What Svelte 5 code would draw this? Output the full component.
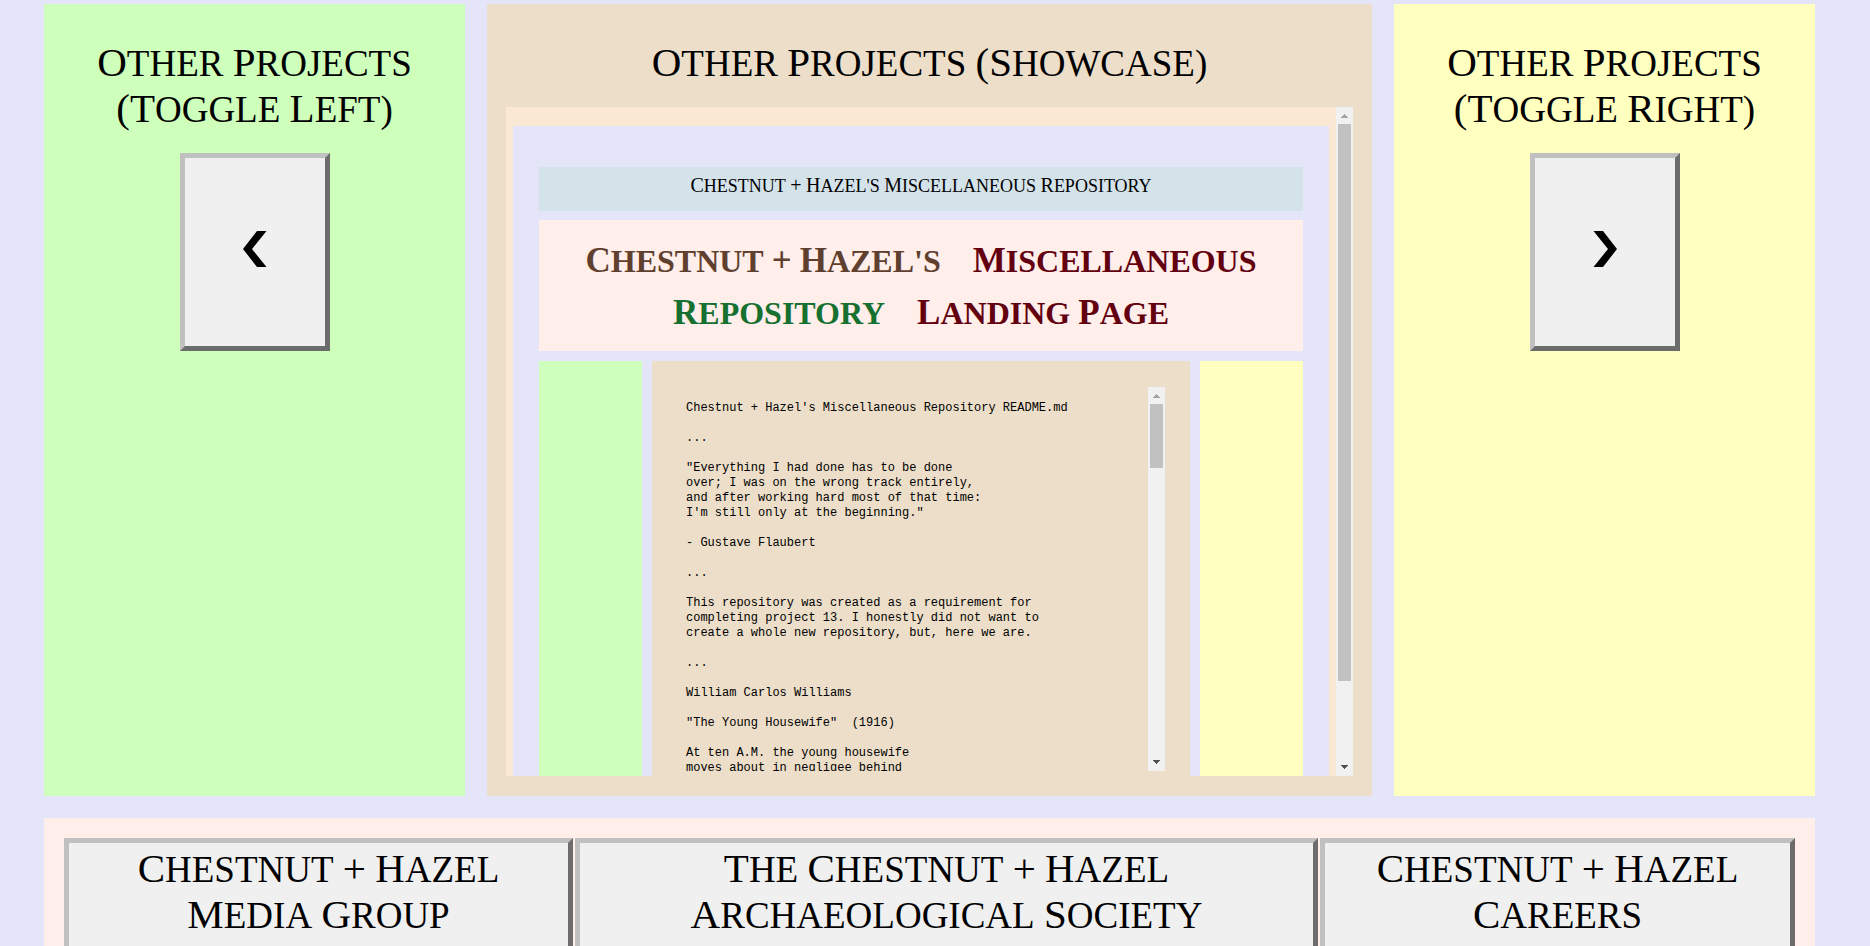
<script>
  const footerLinks = [
    ['Chestnut + Hazel', 'Media Group'],
    ['The Chestnut + Hazel', 'Archaeological Society'],
    ['Chestnut + Hazel', 'Careers']
  ];

  const heroLines = [
    [
      { text: "Chestnut + Hazel's", tone: 'brown' },
      { text: 'Miscellaneous', tone: 'maroon' }
    ],
    [
      { text: 'Repository', tone: 'green' },
      { text: 'Landing Page', tone: 'maroon' }
    ]
  ];

  const readme = `Chestnut + Hazel's Miscellaneous Repository README.md

...

"Everything I had done has to be done
over; I was on the wrong track entirely,
and after working hard most of that time:
I'm still only at the beginning."

- Gustave Flaubert

...

This repository was created as a requirement for
completing project 13. I honestly did not want to
create a whole new repository, but, here we are.

...

William Carlos Williams

"The Young Housewife"  (1916)

At ten A.M. the young housewife
moves about in negligee behind`;
</script>

{#snippet caps(text)}
  {#each text.split(' ') as word, i}{#if i > 0}{' '}{/if}<span class="word">{word}</span>{/each}
{/snippet}

{#snippet scrollbar(size)}
  <div class="scrollbar" aria-hidden="true">
    <svg class="up" viewBox="0 0 17 17"><path d="M5 11h7v-1h-1v-1h-1v-1h-1v-1h-1v1h-1v1h-1v1h-1z" /></svg>
    <div class="track"><div class="thumb" style="height: {size}%"></div></div>
    <svg class="down" viewBox="0 0 17 17"><path d="M5 6h7v1h-1v1h-1v1h-1v1h-1v-1h-1v-1h-1v-1h-1z" /></svg>
  </div>
{/snippet}

<div class="page">
  <main class="projects">
    <section class="panel side left">
      <h2>
        <span class="line">{@render caps('Other Projects')}</span>
        <span class="line">{@render caps('(Toggle Left)')}</span>
      </h2>
      <button class="toggle" type="button" aria-label="Previous project">
        <svg viewBox="0 0 24 36"><path d="M14 0h9.500L9 18l14.500 18H14L0 18z" /></svg>
      </button>
    </section>

    <section class="panel showcase">
      <h2><span class="line">{@render caps('Other Projects (Showcase)')}</span></h2>
      <div class="frame">
        <div class="viewport">
          <div class="site">
            <div class="bar">{@render caps("Chestnut + Hazel's Miscellaneous Repository")}</div>
            <h1 class="hero">
              {#each heroLines as parts}
                <span class="hero-line">
                  {#each parts as part}
                    <span class={part.tone}>{@render caps(part.text)}</span>
                  {/each}
                </span>
              {/each}
            </h1>
            <div class="columns">
              <div class="left"></div>
              <div class="reader">
                <div class="document">
                  <pre>{readme}</pre>
                  {@render scrollbar(18.3)}
                </div>
              </div>
              <div class="right"></div>
            </div>
          </div>
        </div>
        {@render scrollbar(87.7)}
      </div>
    </section>

    <section class="panel side right">
      <h2>
        <span class="line">{@render caps('Other Projects')}</span>
        <span class="line">{@render caps('(Toggle Right)')}</span>
      </h2>
      <button class="toggle" type="button" aria-label="Next project">
        <svg viewBox="0 0 24 36"><path d="M10 0H.5L15 18 .5 36H10L24 18z" /></svg>
      </button>
    </section>
  </main>

  <footer>
    {#each footerLinks as lines}
      <button type="button">
        {#each lines as line}
          <span class="line">{@render caps(line)}</span>
        {/each}
      </button>
    {/each}
  </footer>
</div>

<style>
  :global(body) {
    margin: 0;
    background: #e5e5fa;
  }

  .page {
    box-sizing: border-box;
    height: 100vh;
    overflow: hidden;
    padding: 4px 55px 0 44px;
    background: #e5e5fa;
    color: #000;
    font-family: "Liberation Serif", serif;
    font-size: 37px;
    line-height: 46px;
    text-align: center;
  }

  .word {
    display: inline-block;
    text-transform: uppercase;
  }

  .word::first-letter {
    font-size: 41px;
    line-height: 0;
  }

  .line {
    display: block;
    white-space: nowrap;
  }

  .projects {
    display: grid;
    grid-template-columns: 421fr 885fr 421fr;
    gap: 22px;
  }

  .panel {
    min-width: 0;
    padding: 37px 19px 20px;
  }

  .left {
    background: #ceffbb;
  }

  .right {
    background: #ffffc0;
  }

  .showcase,
  .reader {
    background: #ecdec9;
  }

  h1,
  h2 {
    margin: 0;
    font-size: inherit;
    font-weight: 400;
  }

  h2 {
    margin-bottom: 20px;
  }

  button {
    border: 5px solid;
    border-color: #c0c0c0 #6c6c6c #6c6c6c #c0c0c0;
    border-radius: 0;
    background: #f0f0f0;
    color: #000;
    font: inherit;
  }

  .toggle {
    display: flex;
    align-items: center;
    justify-content: center;
    width: 150px;
    height: 198px;
    margin: 0 auto;
    padding: 0 0 6px;
  }

  .toggle svg {
    width: 24px;
    height: 36px;
  }

  .frame {
    display: flex;
    height: 669px;
    background: #fae7d4;
  }

  .viewport {
    box-sizing: border-box;
    flex: 1;
    min-width: 0;
    overflow: hidden;
    padding: 19px 7px 0;
  }

  .site {
    padding: 41px 26px 26px;
    background: #e5e5fa;
  }

  .bar {
    padding: 9px 8px 15px;
    background: #d4e2ea;
    font-size: 18px;
    line-height: 20px;
  }

  .bar :global(.word)::first-letter {
    font-size: 20px;
  }

  .hero {
    margin: 9px 0 10px;
    padding: 15px 8px 12px;
    background: #ffeeea;
    font-size: 32px;
    font-weight: 700;
    line-height: 52px;
  }

  .hero .word::first-letter {
    font-size: 35px;
  }

  .hero-line {
    display: flex;
    justify-content: center;
    gap: 32px;
    white-space: nowrap;
  }

  .brown {
    color: #5f402f;
  }

  .maroon {
    color: #630010;
  }

  .green {
    color: #16702f;
  }

  .columns {
    display: grid;
    grid-template-columns: 103fr 538fr 103fr;
    gap: 10px;
  }

  .reader {
    min-width: 0;
    padding: 26px 25px 26px 26px;
  }

  .document {
    display: flex;
    height: 384px;
  }

  pre {
    flex: 1;
    min-width: 0;
    margin: 0;
    padding: 14px 8px 0;
    overflow: hidden;
    font-family: "Liberation Mono", monospace;
    font-size: 12px;
    line-height: 15px;
    text-align: left;
  }

  .scrollbar {
    display: flex;
    flex: none;
    flex-direction: column;
    width: 17px;
    background: #f1f1f1;
  }

  .scrollbar svg {
    flex: none;
    width: 17px;
    height: 17px;
    shape-rendering: crispEdges;
  }

  .up {
    fill: #a3a3a3;
  }

  .down {
    fill: #505050;
  }

  .track {
    flex: 1;
    min-height: 0;
    padding: 0 2px;
  }

  .thumb {
    background: #c1c1c1;
  }

  footer {
    display: grid;
    grid-template-columns: 509fr 743fr 475fr;
    gap: 2px;
    margin-top: 22px;
    padding: 20px;
    background: #ffeeea;
  }

  footer button {
    min-width: 0;
    padding: 4px 16px 24px;
  }
</style>
